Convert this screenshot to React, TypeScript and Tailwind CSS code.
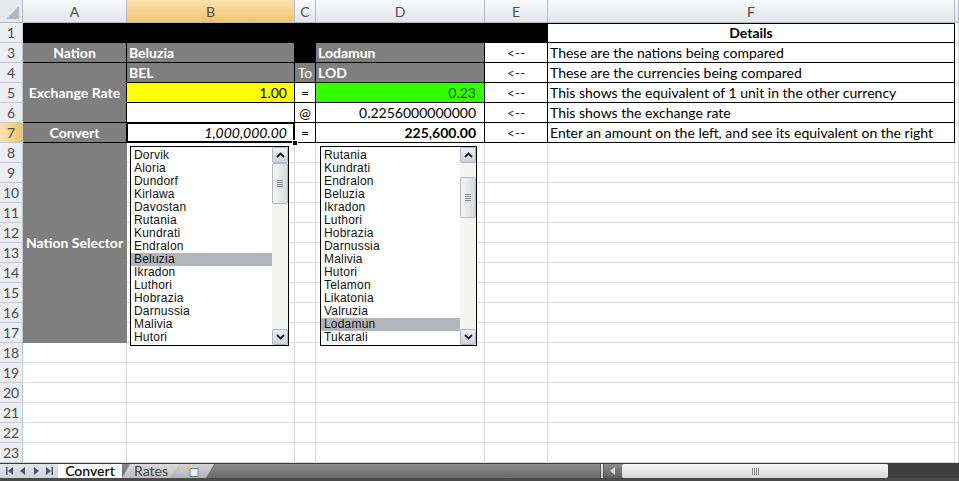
import React from 'react';

// --- sheet data ---
const LIST_A = ['Dorvik', 'Aloria', 'Dundorf', 'Kirlawa', 'Davostan', 'Rutania', 'Kundrati', 'Endralon', 'Beluzia', 'Ikradon', 'Luthori', 'Hobrazia', 'Darnussia', 'Malivia', 'Hutori'];
const LIST_B = ['Rutania', 'Kundrati', 'Endralon', 'Beluzia', 'Ikradon', 'Luthori', 'Hobrazia', 'Darnussia', 'Malivia', 'Hutori', 'Telamon', 'Likatonia', 'Valruzia', 'Lodamun', 'Tukarali'];

const GRIDLINE = 'border-[#d9dbde]';

const Cell = ({ className = '', children, b = GRIDLINE }: { className?: string; children?: React.ReactNode; b?: string }) => (
  <div className={`border-r border-b ${b} min-w-0 overflow-hidden whitespace-nowrap flex items-center ${className}`}>{children}</div>
);

const ColHead = ({ label, active = false }: { label: string; active?: boolean }) => (
  <div
    className={`border-r border-b border-[#b8bcc2] flex items-center justify-center text-[14px] text-[#4d4d4d] bg-gradient-to-b ${
      active ? 'from-[#fbe2b0] to-[#f1c46a]' : 'from-[#f8f9fa] to-[#e2e5e9]'
    }`}
  >
    {label}
  </div>
);

const RowHead = ({ n, active = false }: { n: number; active?: boolean }) => (
  <div
    className={`border-r border-b border-[#c4c8ce] flex items-center justify-center text-[14px] text-[#4d4d4d] ${
      active ? 'bg-gradient-to-r from-[#fbe2b0] to-[#f1c46a]' : 'bg-[#eceef1]'
    }`}
  >
    {n}
  </div>
);

const Chevron = ({ up }: { up: boolean }) => (
  <svg width="9" height="6" viewBox="0 0 9 6">
    <polyline points={up ? '1,5 4.5,1.5 8,5' : '1,1 4.5,4.5 8,1'} fill="none" stroke="#1d1d1d" strokeWidth="1.8" />
  </svg>
);

const ScrollBtn = ({ up }: { up: boolean }) => (
  <div className="h-[16px] w-[16px] rounded-[2px] border border-[#b3b8c2] bg-gradient-to-b from-[#eef0f4] to-[#cdd2da] flex items-center justify-center">
    <Chevron up={up} />
  </div>
);

const ListBox = ({ items, selected, thumbTop, className }: { items: string[]; selected: string; thumbTop: number; className: string }) => (
  <div className={`absolute top-[146px] h-[200px] border border-black bg-white flex font-[family-name:'Liberation_Sans',Arial,sans-serif] text-[12px] tracking-[0.2px] text-[#111] ${className}`}>
    <div className="flex-1 pt-[2px] overflow-hidden">
      {items.map((it) => (
        <div key={it} className={`h-[13px] leading-[13px] pl-[3px] ${it === selected ? 'bg-[#b2b5bc]' : ''}`}>
          {it}
        </div>
      ))}
    </div>
    <div className="w-[16px] flex flex-col bg-[#f4f4f2]">
      <ScrollBtn up />
      <div className="flex-1 relative">
        <div
          className="absolute left-0 w-[16px] h-[41px] rounded-[2px] border border-[#b6b9bf] bg-gradient-to-r from-[#f4f4f4] to-[#d9dadd] flex items-center justify-center"
          style={{ top: thumbTop }}
        >
          <div className="flex flex-col gap-[1px]">
            <div className="w-[6px] h-px bg-[#8c8f96]" />
            <div className="w-[6px] h-px bg-[#8c8f96]" />
            <div className="w-[6px] h-px bg-[#8c8f96]" />
            <div className="w-[6px] h-px bg-[#8c8f96]" />
          </div>
        </div>
      </div>
      <ScrollBtn up={false} />
    </div>
  </div>
);

const Sheet = () => {
  const gray = 'bg-[#7f7f7f] text-white font-bold';
  const blk = 'border-black';
  const rows: React.ReactNode[] = [];

  // rows 8 - 23
  for (let r = 8; r <= 23; r++) {
    rows.push(<RowHead key={`rh${r}`} n={r} />);
    if (r === 8) {
      rows.push(
        <Cell key="a8" b="border-[#7f7f7f]" className={`row-span-10 ${gray} justify-center`}>
          Nation Selector
        </Cell>
      );
    } else if (r > 17) {
      rows.push(<Cell key={`a${r}`} />);
    }
    ['b', 'c', 'd', 'e', 'f', 'g'].forEach((c) => rows.push(<Cell key={`${c}${r}`} />));
  }

  return (
    <div className="relative grid grid-cols-[23px_104px_168px_21px_169px_63px_407px_1fr] grid-rows-[23px_repeat(22,20px)] h-[463px] text-[14px] text-black">
      {/* header row */}
      <div className="border-r border-b border-[#b8bcc2] bg-[#e6e8ec] relative">
        <div className="absolute right-[3px] bottom-[3px] w-0 h-0 border-l-[13px] border-l-transparent border-b-[13px] border-b-[#b1b5bc]" />
      </div>
      <ColHead label="A" />
      <ColHead label="B" active />
      <ColHead label="C" />
      <ColHead label="D" />
      <ColHead label="E" />
      <ColHead label="F" />
      <ColHead label="" />

      {/* row 1 */}
      <RowHead n={1} />
      <Cell b={blk} className="col-span-5 bg-black" />
      <Cell b={blk} className="font-bold justify-center shadow-[inset_0_1px_0_#000]">Details</Cell>
      <Cell />

      {/* row 3 */}
      <RowHead n={3} />
      <Cell b={blk} className={`${gray} justify-center`}>Nation</Cell>
      <Cell b={blk} className={`${gray} pl-[2px]`}>Beluzia</Cell>
      <Cell b={blk} className="bg-black" />
      <Cell b={blk} className={`${gray} pl-[2px]`}>Lodamun</Cell>
      <Cell b={blk} className="justify-center text-[#333]">&lt;--</Cell>
      <Cell b={blk} className="pl-[2px]">These are the nations being compared</Cell>
      <Cell />

      {/* row 4 */}
      <RowHead n={4} />
      <Cell b={blk} className={`row-span-3 ${gray} justify-center`}>Exchange Rate</Cell>
      <Cell b={blk} className={`${gray} pl-[2px]`}>BEL</Cell>
      <Cell b={blk} className="bg-[#7f7f7f] text-white justify-center">To</Cell>
      <Cell b={blk} className={`${gray} pl-[2px]`}>LOD</Cell>
      <Cell b={blk} className="justify-center text-[#333]">&lt;--</Cell>
      <Cell b={blk} className="pl-[2px]">These are the currencies being compared</Cell>
      <Cell />

      {/* row 5 */}
      <RowHead n={5} />
      <Cell b={blk} className="bg-[#ffff00] justify-end pr-[7px]">1.00</Cell>
      <Cell b={blk} className="justify-center">=</Cell>
      <Cell b={blk} className="bg-[#33ff00] text-[#246010] justify-end pr-[8px]">0.23</Cell>
      <Cell b={blk} className="justify-center text-[#333]">&lt;--</Cell>
      <Cell b={blk} className="pl-[2px]">This shows the equivalent of 1 unit in the other currency</Cell>
      <Cell />

      {/* row 6 */}
      <RowHead n={6} />
      <Cell b={blk} />
      <Cell b={blk} className="justify-center">@</Cell>
      <Cell b={blk} className="justify-end pr-[8px]">0.2256000000000</Cell>
      <Cell b={blk} className="justify-center text-[#333]">&lt;--</Cell>
      <Cell b={blk} className="pl-[2px]">This shows the exchange rate</Cell>
      <Cell />

      {/* row 7 */}
      <RowHead n={7} active />
      <Cell b={blk} className={`${gray} justify-center`}>Convert</Cell>
      <div className="relative border-r border-b border-black flex items-center justify-end pr-[7px] italic overflow-visible">
        1,000,000.00
        <div className="absolute -left-px -top-px -right-px -bottom-px border-2 border-black pointer-events-none" />
        <div className="absolute -right-[4px] -bottom-[4px] w-[6px] h-[6px] bg-black border border-white" />
      </div>
      <Cell b={blk} className="justify-center">=</Cell>
      <Cell b={blk} className="font-bold justify-end pr-[8px]">225,600.00</Cell>
      <Cell b={blk} className="justify-center text-[#333]">&lt;--</Cell>
      <Cell b={blk} className="pl-[2px]">Enter an amount on the left, and see its equivalent on the right</Cell>
      <Cell />

      {rows}

      {/* form controls floating over the sheet */}
      <ListBox items={LIST_A} selected="Beluzia" thumbTop={0} className="left-[130px] w-[159px]" />
      <ListBox items={LIST_B} selected="Lodamun" thumbTop={14} className="left-[320px] w-[157px]" />
    </div>
  );
};

const NavGlyph = ({ d }: { d: string }) => (
  <svg width="8" height="8" viewBox="0 0 8 8">
    <path d={d} fill="#4d5566" />
  </svg>
);

const TabBar = () => (
  <div className="flex flex-col">
    <div className="flex h-[15px] border-t border-[#3c3c3c] bg-gradient-to-b from-[#8a8a8a] to-[#6a6a6a] text-[14px]">
      <div className="w-[58px] flex items-center justify-around px-[3px] bg-gradient-to-b from-[#e3e7ec] to-[#cdd3db]">
        <NavGlyph d="M0 0h1.5v8H0z M7 0v8L2 4z" />
        <NavGlyph d="M6 0v8L1 4z" />
        <NavGlyph d="M2 0v8l5-4z" />
        <NavGlyph d="M1 0v8l5-4z M6.5 0H8v8H6.5z" />
      </div>
      <div className="w-[64px] bg-white flex items-center justify-center font-semibold text-[#111] leading-none">Convert</div>
      <div className="w-[58px] bg-gradient-to-b from-[#dadada] to-[#bdbdbd] [clip-path:polygon(8px_0,100%_0,calc(100%-8px)_100%,0_100%)] flex items-center justify-center text-[#444] leading-none">
        Rates
      </div>
      <div className="w-[42px] -ml-[8px] bg-gradient-to-b from-[#d4d4d4] to-[#b4b4b4] [clip-path:polygon(8px_0,100%_0,calc(100%-8px)_100%,0_100%)] flex items-center justify-center">
        <svg width="14" height="11" viewBox="0 0 14 11">
          <rect x="4" y="2.5" width="8" height="8" fill="#eef3fa" stroke="#5b7fb2" />
          <path d="M3 0l0.8 1.8L5.5 2.5 3.8 3.2 3 5 2.2 3.2 0.5 2.5 2.2 1.8z" fill="#f2b632" />
        </svg>
      </div>
      <div className="flex-1" />
      <div className="w-[4px] bg-gradient-to-b from-[#efefef] to-[#c6c6c6] border-x border-[#555]" />
      <div className="w-[18px] bg-gradient-to-b from-[#8d8d8d] to-[#5f5f5f] flex items-center justify-center">
        <svg width="6" height="8" viewBox="0 0 6 8">
          <path d="M5 0v8L0 4z" fill="#d8d8d8" />
        </svg>
      </div>
      <div className="w-[266px] rounded-[2px] bg-gradient-to-b from-[#f7f7f7] to-[#d9d9d9] flex items-center justify-center gap-[1px]">
        <div className="w-px h-[7px] bg-[#8a8a8a]" />
        <div className="w-px h-[7px] bg-[#8a8a8a]" />
        <div className="w-px h-[7px] bg-[#8a8a8a]" />
        <div className="w-px h-[7px] bg-[#8a8a8a]" />
      </div>
      <div className="w-[71px] bg-[#3e3e3e]" />
    </div>
    <div className="h-[3px] bg-[#4a4a4a]" />
  </div>
);

export default function App() {
  return (
    <div className="w-[959px] h-[481px] overflow-hidden bg-white font-[family-name:Lato,'Open_Sans',sans-serif]">
      <Sheet />
      <TabBar />
    </div>
  );
}
